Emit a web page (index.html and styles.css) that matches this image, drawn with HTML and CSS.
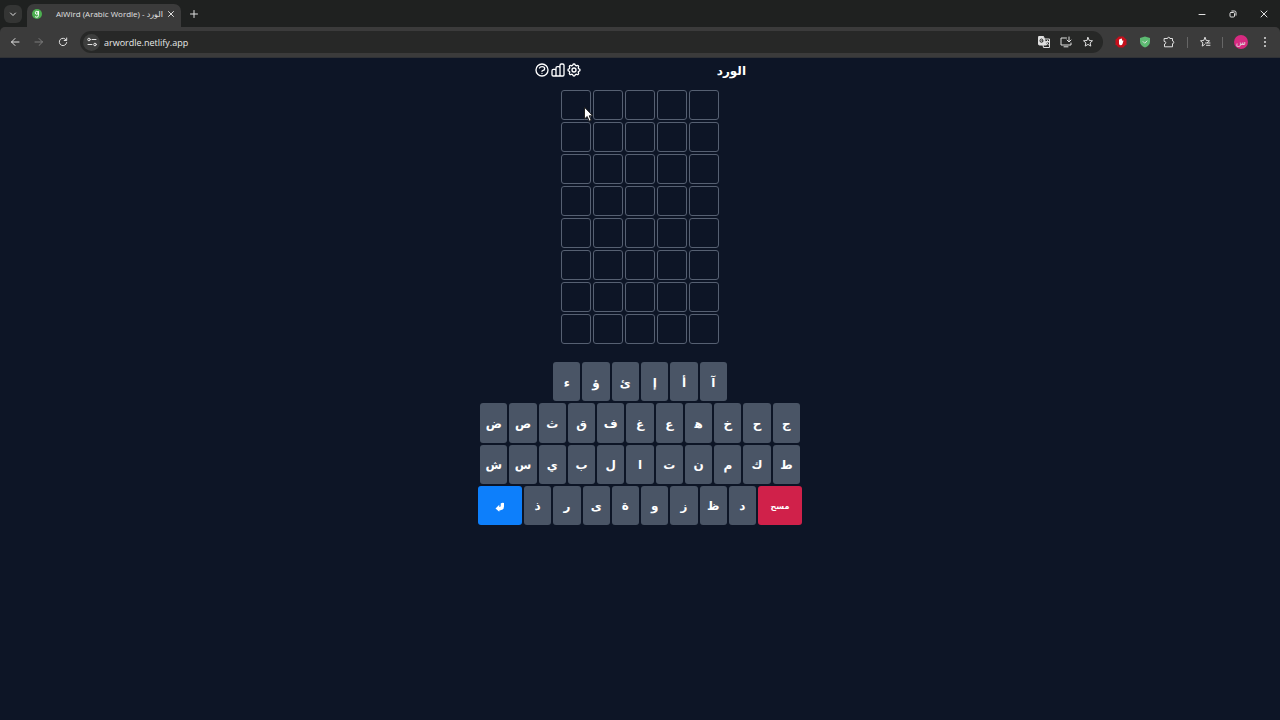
FILE: index.html
```html
<!DOCTYPE html>
<html lang="ar">
<head>
    <meta charset="UTF-8">
    <meta name="viewport" content="width=device-width, initial-scale=1.0">
    <title>AlWird (Arabic Wordle) - الورد</title>
    <link rel="stylesheet" href="styles.css">
</head>
<body>
    <div class="browser">
        <div class="tabs">
            <button class="tab-search" aria-label="Search tabs">
                <svg class="icon-small" viewBox="0 0 10 10"><path d="M2.5 4l2.500 2.500 2.500-2.500"/></svg>
            </button>
            <div class="tab">
                <svg class="favicon" viewBox="0 0 10 10"><circle cx="5" cy="5" r="5"/><circle class="mark" cx="4.800" cy="3.800" r="1.500"/><path class="mark" d="M6.400 2.300v4.200q0 1.700-1.600 1.700-1 0-1.500-.5"/></svg>
                <span class="tab-title" dir="ltr">AlWird (Arabic Wordle) - الورد</span>
                <button class="plain" aria-label="Close tab">
                    <svg class="icon-small" viewBox="0 0 10 10"><path d="M2.500 2.500l5 5M7.500 2.500l-5 5"/></svg>
                </button>
            </div>
            <button class="plain new-tab" aria-label="New tab">
                <svg class="icon-small" viewBox="0 0 10 10"><path d="M5 1.500v7M1.500 5h7"/></svg>
            </button>
            <div class="window-controls">
                <button class="plain" aria-label="Minimize"><svg class="icon-small" viewBox="0 0 10 10"><path d="M2 5.500h6"/></svg></button>
                <button class="plain" aria-label="Restore"><svg class="icon-small" viewBox="0 0 10 10"><rect x="2" y="3.500" width="4.500" height="4.500" rx="1"/><path d="M3.800 2h2.700q1.500 0 1.500 1.500v2.700"/></svg></button>
                <button class="plain" aria-label="Close window"><svg class="icon-small" viewBox="0 0 10 10"><path d="M2 2l6 6M8 2l-6 6"/></svg></button>
            </div>
        </div>
        <div class="toolbar">
            <div class="nav">
                <button class="plain" aria-label="Back"><svg class="icon" viewBox="0 0 12 12"><path d="M10 6H2.500M6 2.500L2.500 6 6 9.500"/></svg></button>
                <button class="plain" aria-label="Forward" disabled><svg class="icon" viewBox="0 0 12 12"><path d="M2 6h7.500M6 2.500L9.500 6 6 9.500"/></svg></button>
                <button class="plain" aria-label="Reload"><svg class="icon" viewBox="0 0 12 12"><path d="M9.200 4A3.700 3.700 0 1 0 9.700 6.500M9.700 2v2.500H7.200"/></svg></button>
            </div>
            <div class="address">
                <button class="site-info" aria-label="Site information"><svg class="icon" viewBox="0 0 12 12"><circle cx="3" cy="3.500" r="1.300"/><path d="M6 3.500h4M2 8.500h4"/><circle cx="9" cy="8.500" r="1.300"/></svg></button>
                <input class="url" type="text" value="arwordle.netlify.app" aria-label="Address" dir="ltr">
                <button class="plain" aria-label="Translate"><svg class="icon" viewBox="0 0 12 12"><path class="fill" d="M1 .5h4.500L8.500 9H1.500Q.5 9 .5 8V1.500z"/><path d="M6.500 3h5v8.500H5.500L5 9M8 5.500h3M9.500 4.500v1M10.500 5.500q-.5 2-2 3M8.500 6.500l2 2.500"/><path class="ink" d="M5 4q-.5-1-1.500-1-1.500 0-1.500 1.700T3.500 6.300q1.500 0 1.500-1.500H3.700"/></svg></button>
                <button class="plain" aria-label="Install app"><svg class="icon" viewBox="0 0 12 12"><path d="M6.500 2H1v7h10V7M4 10.800h4M9 1v4.500M7 4l2 2 2-2"/></svg></button>
                <button class="plain" aria-label="Bookmark"><svg class="icon" viewBox="0 0 12 12"><path d="M6 1.500l1.300 3 3.200.3-2.400 2.100.7 3.200L6 8.400l-2.800 1.700.7-3.200L1.500 4.800l3.200-.3z"/></svg></button>
            </div>
            <div class="extensions">
                <button class="plain" aria-label="Ad blocker"><svg class="icon" viewBox="0 0 12 12"><path class="red" d="M3.700.5h4.600l3.200 3.200v4.600l-3.200 3.200H3.700L.5 8.300V3.700z"/><path class="white" d="M4 5V3.500q.5-.5 1 0V3q.5-.6 1 0v-.3q.5-.5 1 0V5l.8-.8q.8 0 .6.700L7.500 8q-.5 1.300-2 1.300Q4 9.300 4 7.500z"/></svg></button>
                <button class="plain" aria-label="Protection"><svg class="icon" viewBox="0 0 12 12"><path class="green" d="M6 .5l5 1.500v3.500Q11 9.500 6 11.500 1 9.500 1 5.500V2z"/><path d="M4 5.500l1.700 1.700L8 5"/></svg></button>
                <button class="plain" aria-label="Extensions"><svg class="icon" viewBox="0 0 12 12"><path d="M1.500 2.500H4.500a1.200 1.200 0 0 1 2.400 0H9.500V5a1.300 1.300 0 0 1 0 2.600V10.800H1.500V8a1.300 1.300 0 0 0 0-2.600z"/></svg></button>
            </div>
            <div class="side">
                <span class="divider"></span>
                <button class="plain" aria-label="Bookmarks list"><svg class="icon" viewBox="0 0 12 12"><path d="M6 1.500l1.300 3 3.200.3-2.200 1.900M5.500 8.600L3.200 10.100l.7-3.200L1.500 4.800l3.200-.3L6 1.500M6.500 7h4.500M7.500 9.300h3.500"/></svg></button>
                <span class="divider"></span>
                <button class="avatar" aria-label="Profile">س</button>
                <button class="plain" aria-label="Menu"><svg class="icon" viewBox="0 0 12 12"><path class="dots" d="M6 2v.01M6 6v.01M6 10v.01"/></svg></button>
            </div>
        </div>
    </div>

    <main class="game" dir="rtl">
        <header class="header">
            <h1>الورد</h1>
            <div class="actions">
                <button class="plain" aria-label="الإعدادات"><svg class="icon-game" viewBox="0 0 24 24"><path d="M10.300 4.300c.4-1.700 3-1.700 3.400 0a1.700 1.700 0 0 0 2.600 1.100c1.500-1 3.300.8 2.400 2.400a1.700 1.700 0 0 0 1 2.500c1.800.4 1.800 3 0 3.400a1.700 1.700 0 0 0-1 2.600c.9 1.500-.9 3.300-2.400 2.400a1.700 1.700 0 0 0-2.600 1c-.4 1.800-3 1.800-3.400 0a1.700 1.700 0 0 0-2.600-1c-1.500.9-3.300-.9-2.400-2.400a1.700 1.700 0 0 0-1-2.600c-1.800-.4-1.800-3 0-3.400a1.700 1.700 0 0 0 1-2.500c-.9-1.600.9-3.400 2.400-2.400 1 .6 2.300.1 2.600-1.100z"/><circle cx="12" cy="12" r="3"/></svg></button>
                <button class="plain" aria-label="الإحصائيات"><svg class="icon-game" viewBox="0 0 24 24"><path d="M9 19v-6a2 2 0 0 0-2-2H5a2 2 0 0 0-2 2v6a2 2 0 0 0 2 2h2a2 2 0 0 0 2-2zm0 0V9a2 2 0 0 1 2-2h2a2 2 0 0 1 2 2v10m-6 0a2 2 0 0 0 2 2h2a2 2 0 0 0 2-2m0 0V5a2 2 0 0 1 2-2h2a2 2 0 0 1 2 2v14a2 2 0 0 1-2 2h-2a2 2 0 0 1-2-2z"/></svg></button>
                <button class="plain" aria-label="مساعدة"><svg class="icon-game" viewBox="0 0 24 24"><circle cx="12" cy="12" r="9"/><path d="M8.200 9c.6-1.200 2-2 3.800-2 2.200 0 4 1.300 4 3 0 1.400-1.300 2.600-3 2.900-.5.100-1 .5-1 1.100m0 3v.01"/></svg></button>
            </div>
        </header>

        <div class="board"></div>

        <div class="keyboard">
            <div class="row row-short">
                <button class="key">آ</button><button class="key">أ</button><button class="key">إ</button><button class="key">ئ</button><button class="key">ؤ</button><button class="key">ء</button>
            </div>
            <div class="row row-full">
                <button class="key">ج</button><button class="key">ح</button><button class="key">خ</button><button class="key">ه&zwj;</button><button class="key">ع</button><button class="key">غ</button><button class="key">ف</button><button class="key">ق</button><button class="key">ث</button><button class="key">ص</button><button class="key">ض</button>
            </div>
            <div class="row row-full">
                <button class="key">ط</button><button class="key">ك</button><button class="key">م</button><button class="key">ن</button><button class="key">ت</button><button class="key">ا</button><button class="key">ل</button><button class="key">ب</button><button class="key">ي</button><button class="key">س</button><button class="key">ش</button>
            </div>
            <div class="row">
                <button class="key key-delete">مسح</button><button class="key">د</button><button class="key">ظ</button><button class="key">ز</button><button class="key">و</button><button class="key">ة</button><button class="key">ى</button><button class="key">ر</button><button class="key">ذ</button>
                <button class="key key-enter" aria-label="إدخال"><svg class="icon-enter" viewBox="0 0 10 10"><path d="M.5 6.500L4.300 2.800V5q1.300 0 1.400-1V1.500Q7.300.3 9 1v3.500Q9 8 5.500 8.300l-1.200.1v1.300z"/></svg></button>
            </div>
        </div>
    </main>

    <svg class="cursor" viewBox="0 0 9 15"><path d="M.5.5v11.500l2.700-2.500 2 4.700 2-.9-2-4.500h3.300z"/></svg>

    <script>
        const board = document.querySelector('.board');

        for (let i = 0; i < 8 * 5; i++) {
            const tile = document.createElement('div');
            tile.className = 'tile';
            board.appendChild(tile);
        }
    </script>
</body>
</html>
```
FILE: styles.css
```css
:root {
    --page-bg: #0d1526;
    --tabs-bg: #1f2120;
    --toolbar-bg: #3b3b3b;
    --address-bg: #272827;
    --key: #4a5566;
    --chrome-text: #e0e0e0;
}

* { box-sizing: border-box; }

body {
    margin: 0;
    min-height: 100vh;
    background-color: var(--page-bg);
    color: white;
    font-family: "Open Sans", "DejaVu Sans", sans-serif;
}

button {
    display: flex;
    align-items: center;
    justify-content: center;
    padding: 0;
    border: 0;
    color: inherit;
    font-family: inherit;
    cursor: pointer;
}

.plain { background: none; }
.plain:disabled { opacity: 0.4; }

svg {
    display: block;
    flex-shrink: 0;
    fill: none;
    stroke: currentColor;
    stroke-linecap: round;
    stroke-linejoin: round;
}

.icon { width: 12px; height: 12px; }
.icon-small { width: 10px; height: 10px; }
.icon .fill { fill: currentColor; }
.icon .ink { stroke: var(--address-bg); }
.icon .red { fill: #c4101c; stroke: none; }
.icon .green { fill: #5dba72; stroke: none; }
.icon .white { fill: white; stroke: none; }
.icon .dots { stroke-width: 2; }

/* browser window */
.browser {
    color: var(--chrome-text);
    background-color: var(--tabs-bg);
}

.tabs {
    display: flex;
    align-items: center;
    height: 27px;
    padding-left: 4px;
}

.tab-search {
    width: 18px;
    height: 18px;
    border-radius: 6px;
    background-color: #343534;
}

.tab {
    display: flex;
    align-items: center;
    align-self: flex-end;
    width: 154px;
    height: 23px;
    margin-left: 5px;
    padding: 0 5px 4px;
    border-radius: 7px 7px 0 0;
    background-color: var(--toolbar-bg);
}

.favicon {
    width: 10px;
    height: 10px;
    fill: #4caf50;
    stroke: none;
}

.favicon .mark { fill: none; stroke: white; }

.tab-title {
    flex: 1;
    min-width: 0;
    margin-left: 14px;
    font-size: 8px;
    white-space: nowrap;
}

.new-tab { margin-left: 8px; }

.window-controls {
    display: flex;
    gap: 21px;
    margin-left: auto;
    padding-right: 11px;
}

.toolbar {
    display: flex;
    align-items: center;
    height: 31px;
    padding: 0 9px;
    border-radius: 5px 5px 0 0;
    background-color: var(--toolbar-bg);
    border-bottom: 1px solid #303236;
}

.nav { display: flex; gap: 12px; }

.address {
    display: flex;
    flex: 1;
    align-items: center;
    gap: 10px;
    height: 22px;
    margin-left: 11px;
    padding: 0 9px 0 3px;
    border-radius: 11px;
    background-color: var(--address-bg);
}

.site-info {
    width: 17px;
    height: 17px;
    border-radius: 50%;
    background-color: #3d3e3d;
}

.url {
    flex: 1;
    min-width: 0;
    margin-left: -6px;
    padding: 0;
    border: 0;
    outline: 0;
    background: none;
    color: #e8e8e8;
    font-family: inherit;
    font-size: 9px;
}

.extensions, .side {
    display: flex;
    align-items: center;
}

.extensions {
    gap: 12px;
    margin: 0 12px;
}

.side { gap: 11px; }

.divider {
    width: 1px;
    height: 11px;
    background-color: #666;
}

.avatar {
    width: 14px;
    height: 14px;
    border-radius: 50%;
    background-color: #d62a80;
    font-size: 8px;
    line-height: 8px;
}

/* game */
.game {
    display: flex;
    flex-direction: column;
    align-items: center;
    font-family: "DejaVu Sans", sans-serif;
}

.header {
    display: flex;
    align-items: center;
    justify-content: space-between;
    width: 212px;
    height: 24px;
}

.header h1 {
    margin: 0;
    padding-top: 2px;
    font-size: 12px;
    line-height: 24px;
}

.actions { display: flex; }

.icon-game {
    width: 16px;
    height: 16px;
    stroke-width: 2;
}

.board {
    display: grid;
    grid-template-columns: repeat(5, 30px);
    gap: 2px;
    margin-top: 8px;
}

.tile {
    height: 30px;
    border: 1px solid #566072;
    border-radius: 3px;
}

.keyboard {
    display: grid;
    grid-auto-rows: 1fr;
    gap: 2px;
    width: 324px;
    height: 163px;
    margin-top: 18px;
}

.row { display: flex; gap: 2px; }
.row-full { padding: 0 2px; }
.row-short { padding: 0 75px; }

.key {
    flex: 1;
    padding-top: 2px;
    border-radius: 3px;
    background-color: var(--key);
    color: white;
    font-size: 12px;
    font-weight: bold;
}

.key-delete, .key-enter { flex: 0 0 44px; }

.key-delete {
    background-color: #d0214a;
    font-size: 8px;
}

.key-enter {
    padding-top: 4px;
    background-color: #0d7ffb;
}

.icon-enter {
    width: 10px;
    height: 10px;
    fill: white;
    stroke: none;
}

/* mouse pointer lies over the board */
.cursor {
    position: absolute;
    left: 584px;
    top: 107px;
    width: 9px;
    height: 15px;
    fill: white;
    stroke: #222;
    pointer-events: none;
}
```
